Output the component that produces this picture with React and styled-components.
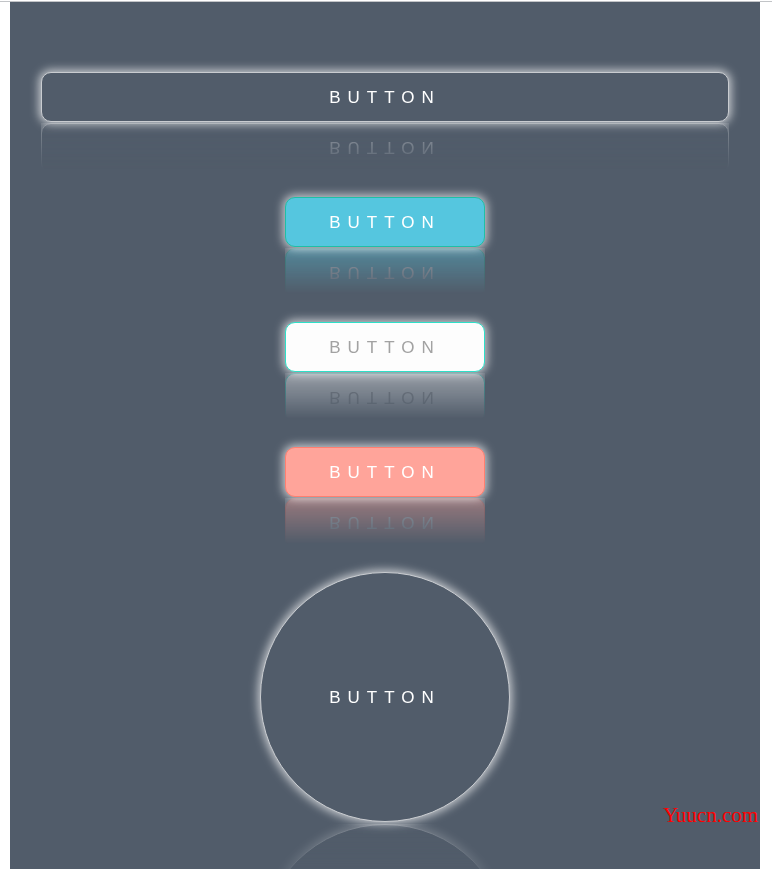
import styled, { createGlobalStyle, css } from "styled-components";

const GlobalStyle = createGlobalStyle`
  html, body {
    margin: 0;
    padding: 0;
    background: #ffffff;
  }
  body {
    font-family: "Liberation Sans", Arial, sans-serif;
  }
`;

const Page = styled.div`
  padding-top: 1px;
  height: 869px;
  box-sizing: border-box;
  overflow: hidden;
`;

const TopRule = styled.div`
  height: 1px;
  background: #c2c4c7;
`;

const Panel = styled.div`
  position: relative;
  margin-left: 10px;
  width: 750px;
  height: 868px;
  background: #515c6a;
  display: flex;
  flex-direction: column;
  align-items: center;
  gap: 75px;
  padding-top: 70px;
  box-sizing: border-box;
  overflow: hidden;
`;

const variants = {
  ghost: css`
    background: #515c6a;
    border-color: #c9ccd0;
    color: #ffffff;
  `,
  cyan: css`
    background: #55c6df;
    border-color: #1fbfa6;
    color: #ffffff;
  `,
  white: css`
    background: #fdfdfd;
    border-color: #2de0c8;
    color: #a2a2a2;
  `,
  salmon: css`
    background: #ffa49a;
    border-color: #ff7f70;
    color: #ffffff;
  `,
};

const Button = styled.button`
  flex: none;
  width: ${({ $wide }) => ($wide ? "688px" : "200px")};
  height: 50px;
  box-sizing: border-box;
  border: 1px solid;
  border-radius: 10px;
  font-family: "Liberation Sans", Arial, sans-serif;
  font-size: 17px;
  letter-spacing: 7px;
  padding: 2px 0 0 0;
  text-transform: uppercase;
  box-shadow: 0 0 10px 2px rgba(255, 255, 255, 0.7);
  -webkit-box-reflect: below 1px
    linear-gradient(transparent, transparent 8%, rgba(255, 255, 255, 0.42));
  cursor: pointer;
  ${({ $variant }) => variants[$variant]}
`;

const RoundButton = styled(Button)`
  width: 250px;
  height: 250px;
  border-radius: 50%;
  -webkit-box-reflect: below 2px
    linear-gradient(transparent, transparent 70%, rgba(255, 255, 255, 0.35));
`;

const Watermark = styled.span`
  position: absolute;
  left: 653px;
  top: 801px;
  font-family: "Liberation Serif", "Times New Roman", serif;
  font-size: 21px;
  color: #ff0000;
  white-space: nowrap;
`;

export default function App() {
  return (
    <>
      <GlobalStyle />
      <Page>
        <TopRule />
        <Panel>
          <Button $wide $variant="ghost">Button</Button>
          <Button $variant="cyan">Button</Button>
          <Button $variant="white">Button</Button>
          <Button $variant="salmon">Button</Button>
          <RoundButton $variant="ghost">Button</RoundButton>
          <Watermark>Yuucn.com</Watermark>
        </Panel>
      </Page>
    </>
  );
}
